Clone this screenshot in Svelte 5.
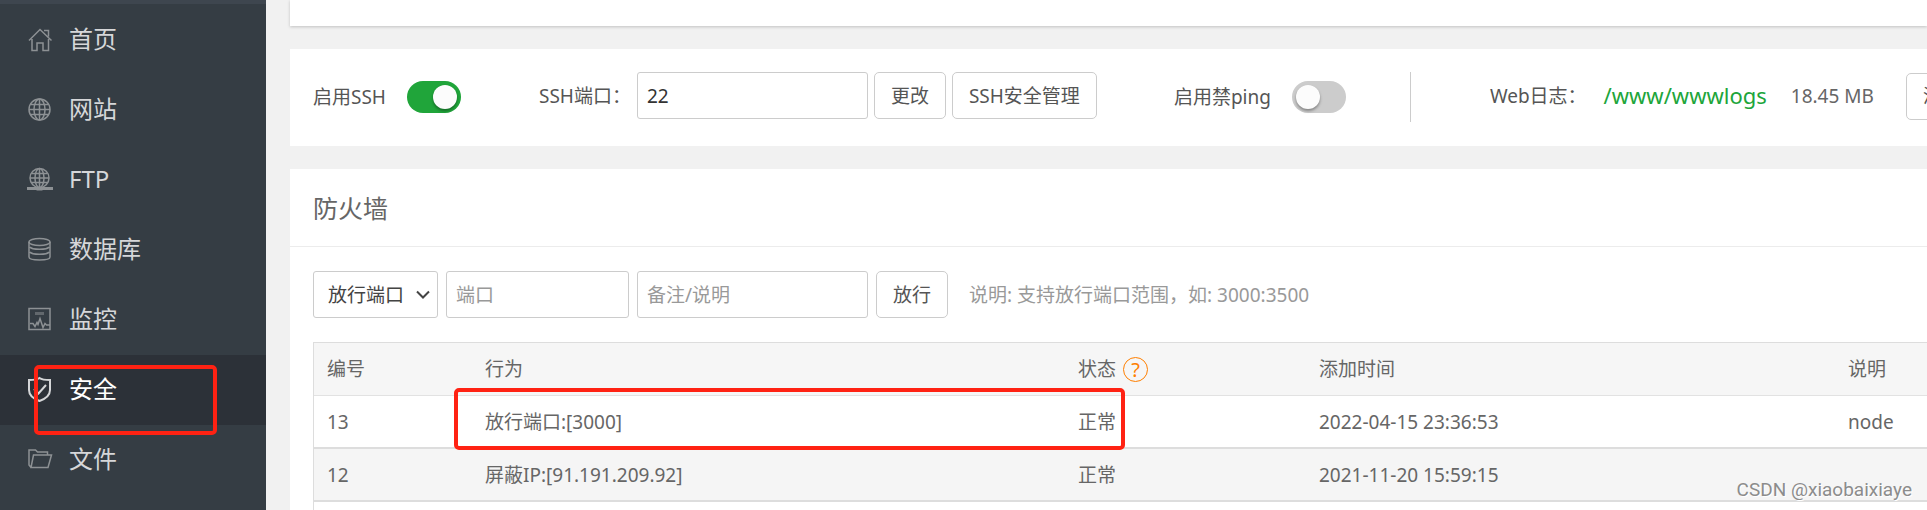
<script>
    const menu = [
        { name: '首页', icon: 'home' },
        { name: '网站', icon: 'globe' },
        { name: 'FTP', icon: 'ftp' },
        { name: '数据库', icon: 'database' },
        { name: '监控', icon: 'monitor' },
        { name: '安全', icon: 'shield' },
        { name: '文件', icon: 'folder' }
    ];

    const rules = [
        { id: 13, action: '放行端口:[3000]', status: '正常', time: '2022-04-15 23:36:53', note: 'node' },
        { id: 12, action: '屏蔽IP:[91.191.209.92]', status: '正常', time: '2021-11-20 15:59:15', note: '' }
    ];

    let active = $state('安全');
    let sshOn = $state(true);
    let pingOff = $state(false);
    let sshPort = $state('22');
    let ruleType = $state('port');
</script>

<div class="layout">
    <nav class="sidebar">
        <ul>
            {#each menu as item}
                <li class:active={active === item.name}>
                    <a href="#{item.icon}" onclick={() => (active = item.name)}>
                        <svg class="icon {item.icon}" viewBox="0 0 25 25" aria-hidden="true">
                            {#if item.icon === 'home'}
                                <path d="M1 13.5 12 2.500 23.500 13.5M16 3.500h4.500v6M4 12v11.500h5v-7.500h6v7.500h5.500v-11.500" />
                            {:else if item.icon === 'globe'}
                                <circle cx="11.500" cy="12.500" r="10.500" />
                                <ellipse cx="11.500" cy="12.500" rx="5.500" ry="10.500" />
                                <path d="M11.500 2v21M1 12.500h21M3 7.500h17M3 17.500h17" />
                            {:else if item.icon === 'ftp'}
                                <circle cx="11.500" cy="11" r="9.500" />
                                <ellipse cx="11.500" cy="11" rx="4.500" ry="9.500" />
                                <path d="M11.500 1.500v19M2 11h19M4 6.500h15M4 15.500h15" />
                                <path class="thick" d="M-1 21.500h26M8.500 22h6" />
                            {:else if item.icon === 'database'}
                                <ellipse cx="11.500" cy="5" rx="10.500" ry="3.500" />
                                <path d="M1 5v15c0 4 21 4 21 0V5M2 10c2 3 17 3 19 0M2 15c2 3 17 3 19 0" />
                            {:else if item.icon === 'monitor'}
                                <path d="M1 1.500h21v21H1zM2 16.500h3l2 3 2-4 1 2 2-6 3 9 2-4 1.500 1.500H22" />
                                <path class="thick" d="M7 6.500h9" />
                            {:else if item.icon === 'shield'}
                                <path d="M11.500 1c3 2 7 2 10.500 2v10c0 5-5 9-10.500 11C6 22 1 18 1 13V3C4.500 3 8.500 3 11.500 1zM6 12l4.500 4.500L18 8" />
                            {:else}
                                <path d="M3 20.500 1 18V3h6.500l2 2h10V8M3 20.500 5.500 8H23.500l-3.500 12.500z" />
                            {/if}
                        </svg>
                        <span>{item.name}</span>
                    </a>
                </li>
            {/each}
        </ul>
        <div class="mark mark-menu"></div>
    </nav>

    <main>
        <section class="card card-top"></section>

        <section class="card toolbar">
            <label class="switch-label">
                启用SSH
                <input type="checkbox" class="switch" bind:checked={sshOn} />
            </label>
            <div class="group ssh">
                <label for="ssh-port">SSH端口：</label>
                <input id="ssh-port" class="text wide" type="text" bind:value={sshPort} />
                <button type="button">更改</button>
                <button type="button">SSH安全管理</button>
            </div>
            <label class="switch-label ping">
                启用禁ping
                <input type="checkbox" class="switch" bind:checked={pingOff} />
            </label>
            <div class="logs">
                <span>Web日志：</span>
                <a class="path" href="#logs">/www/wwwlogs</a>
                <span class="size">18.45 MB</span>
                <button type="button">清空</button>
            </div>
        </section>

        <section class="card firewall">
            <h2>防火墙</h2>
            <div class="body">
                <form class="group">
                    <div class="select">
                        <select aria-label="类型" bind:value={ruleType}>
                            <option value="port">放行端口</option>
                            <option value="ip">屏蔽IP</option>
                        </select>
                        <svg viewBox="0 0 14 10" aria-hidden="true"><path d="M1 1.500 7 7.500l6-6" /></svg>
                    </div>
                    <input class="text port" type="text" placeholder="端口" aria-label="端口" />
                    <input class="text wide" type="text" placeholder="备注/说明" aria-label="备注/说明" />
                    <button type="button">放行</button>
                    <span class="hint">说明: 支持放行端口范围，如: 3000:3500</span>
                </form>

                <div class="table-wrap">
                    <table>
                        <colgroup>
                            <col class="col-id" />
                            <col />
                            <col class="col-status" />
                            <col class="col-time" />
                            <col class="col-note" />
                        </colgroup>
                        <thead>
                            <tr>
                                <th>编号</th>
                                <th>行为</th>
                                <th>
                                    <div class="status-head">状态<a class="help" href="#help">?</a></div>
                                </th>
                                <th>添加时间</th>
                                <th>说明</th>
                            </tr>
                        </thead>
                        <tbody>
                            {#each rules as rule}
                                <tr>
                                    <td>{rule.id}</td>
                                    <td>{rule.action}</td>
                                    <td>{rule.status}</td>
                                    <td>{rule.time}</td>
                                    <td>{rule.note}</td>
                                </tr>
                            {/each}
                        </tbody>
                    </table>
                    <div class="mark mark-row"></div>
                </div>
            </div>
        </section>
    </main>

    <div class="watermark">CSDN @xiaobaixiaye</div>
</div>

<style>
    :global(body) {
        background: #f1f1f1;
    }

    .layout {
        position: relative;
        display: flex;
        height: 100vh;
        overflow: hidden;
        font-family: "Noto Sans", "Noto Sans CJK SC", sans-serif;
        font-size: 19px;
        line-height: 28px;
        color: #555;
    }

    .layout * {
        box-sizing: border-box;
    }

    /* sidebar */
    .sidebar {
        position: relative;
        flex: 0 0 266px;
        background: #353d44;
        border-top: 4px solid #3e464f;
    }

    ul {
        margin: 0;
        padding: 1px 0 0;
        list-style: none;
    }

    li a {
        display: flex;
        align-items: center;
        gap: 16px;
        height: 70px;
        padding: 0 0 2px 28px;
        font-size: 24px;
        color: #d6d7d9;
        text-decoration: none;
    }

    li.active a {
        background: #2c3138;
        color: #fff;
    }

    .icon {
        width: 25px;
        height: 25px;
        overflow: visible;
        fill: none;
        stroke: #8d9194;
        stroke-width: 1.5;
    }

    .icon .thick {
        stroke-width: 3;
    }

    .icon.monitor .thick {
        stroke: #62686d;
    }

    .icon.shield {
        stroke-width: 2;
    }

    .active .icon {
        stroke: #d5d6d8;
    }

    /* cards */
    main {
        flex: 1;
        min-width: 0;
        padding-left: 24px;
    }

    .card {
        background: #fff;
        margin-bottom: 23px;
    }

    .card-top {
        height: 26px;
        box-shadow: 0 1px 3px rgba(0, 0, 0, 0.2);
    }

    .toolbar {
        display: flex;
        align-items: flex-start;
        height: 97px;
        padding: 23px 0 0 23px;
        overflow: hidden;
        white-space: nowrap;
    }

    .group {
        display: flex;
        align-items: center;
        gap: 8px;
    }

    .switch-label {
        display: flex;
        align-items: center;
        gap: 21px;
        height: 50px;
    }

    .switch {
        appearance: none;
        width: 54px;
        height: 32px;
        margin: 0;
        padding: 4px;
        border-radius: 16px;
        background: #ccc;
    }

    .switch::before {
        content: "";
        display: block;
        width: 24px;
        height: 24px;
        border-radius: 50%;
        background: #fcfcfc;
        box-shadow: 0 2px 3px rgba(0, 0, 0, 0.35);
    }

    .switch:checked {
        background: #20a53a;
    }

    .switch:checked::before {
        margin-left: auto;
    }

    .ssh {
        gap: 6px;
        margin-left: 78px;
    }

    .ping {
        margin-left: 77px;
    }

    .logs {
        display: flex;
        align-items: center;
        height: 50px;
        margin-left: 64px;
        padding: 0 0 2px 79px;
        border-left: 1px solid #ccc;
    }

    .path {
        margin: 0 24px 0 17px;
        padding-bottom: 2px;
        font-size: 22px;
        color: #20a53a;
        text-decoration: none;
    }

    .size {
        margin-right: 32px;
        color: #666;
    }

    /* controls */
    button,
    .text,
    select {
        flex: none;
        height: 47px;
        border: 1px solid #ccc;
        background: #fff;
        font: inherit;
        color: #555;
    }

    button {
        padding: 0 16px;
        border-radius: 5px;
    }

    .text {
        padding: 0 9px;
        border-radius: 3px;
        color: #333;
    }

    .text::placeholder {
        color: #999;
        opacity: 1;
    }

    .wide {
        width: 231px;
    }

    .port {
        width: 183px;
    }

    .select {
        position: relative;
    }

    select {
        appearance: none;
        width: 125px;
        padding: 0 14px;
        border-radius: 3px;
        color: #444;
    }

    .select svg {
        position: absolute;
        right: 8px;
        top: 19px;
        width: 14px;
        height: 10px;
        fill: none;
        stroke: #444;
        stroke-width: 2;
        pointer-events: none;
    }

    .hint {
        margin-left: 13px;
        color: #999;
    }

    /* firewall */
    h2 {
        margin: 0;
        padding: 21px 23px 19px;
        border-bottom: 1px solid #ececec;
        font-size: 25px;
        font-weight: 400;
        line-height: 37px;
        color: #666;
    }

    .body {
        padding: 24px 0 0 23px;
    }

    .table-wrap {
        position: relative;
        margin-top: 24px;
        padding-bottom: 40px;
        border: 1px solid #ddd;
        border-right: 0;
    }

    table {
        width: 100%;
        border-collapse: separate;
        border-spacing: 0;
        table-layout: fixed;
        color: #666;
    }

    .col-id {
        width: 158px;
    }

    .col-status {
        width: 241px;
    }

    .col-time {
        width: 529px;
    }

    .col-note {
        width: 92px;
    }

    th,
    td {
        height: 53px;
        padding: 0 13px;
        border-bottom: 2px solid #ddd;
        text-align: left;
        font-weight: 400;
        white-space: nowrap;
    }

    th {
        background: #f6f6f6;
        border-bottom: 1px solid #e2e2e2;
    }

    tbody tr:nth-child(even) {
        background: #f5f5f5;
    }

    .status-head {
        display: flex;
        align-items: center;
        gap: 7px;
    }

    .help {
        width: 25px;
        height: 25px;
        border: 1px solid #ff7f00;
        border-radius: 50%;
        font-size: 20px;
        line-height: 23px;
        text-align: center;
        color: #ff7f00;
        text-decoration: none;
    }

    /* highlights */
    .mark {
        position: absolute;
        border: 4px solid #ff2213;
        border-radius: 5px;
        pointer-events: none;
    }

    .mark-menu {
        left: 34px;
        top: 361px;
        width: 183px;
        height: 70px;
    }

    .mark-row {
        left: 140px;
        top: 45px;
        width: 671px;
        height: 62px;
    }

    .watermark {
        position: absolute;
        right: 15px;
        bottom: 6px;
        font-family: Roboto, sans-serif;
        font-size: 19px;
        color: #8c8c8c;
        text-shadow: 1px 1px 0 #fff;
    }
</style>
